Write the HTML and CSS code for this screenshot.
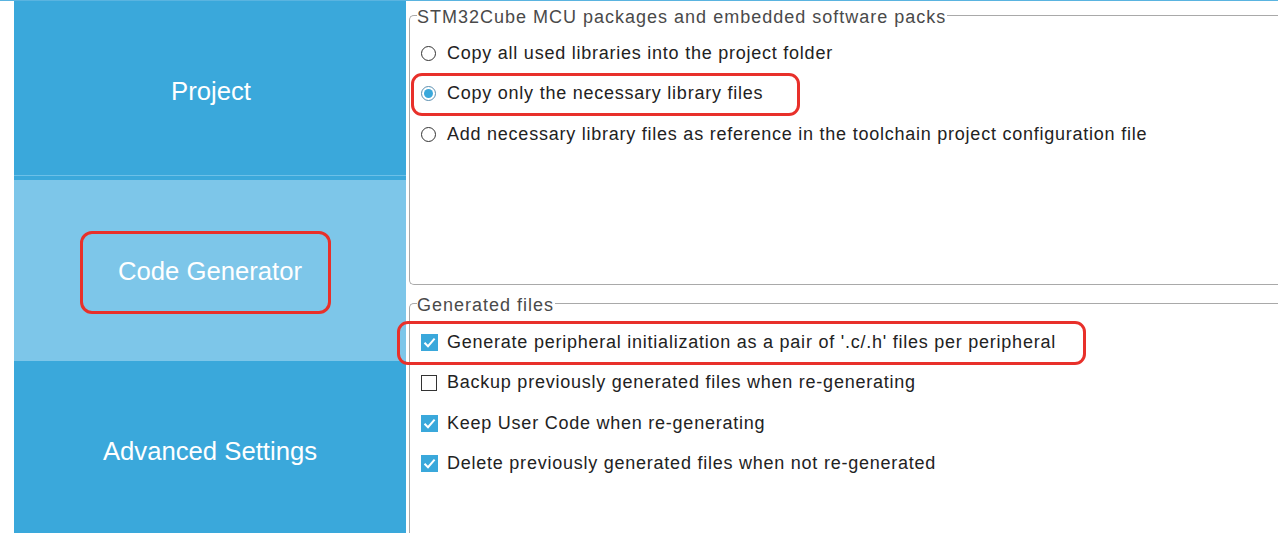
FILE: index.html
```html
<!DOCTYPE html>
<html>
<head>
<meta charset="utf-8">
<link rel="stylesheet" href="styles.css">
</head>
<body>
<div class="page">
  <nav class="sidebar">
    <div class="tab tab-dark tab-project"><span>Project</span></div>
    <div class="tab-sep"></div>
    <div class="tab tab-light tab-code"><span class="hl hl-code">Code Generator</span></div>
    <div class="tab tab-dark tab-adv"><span>Advanced Settings</span></div>
  </nav>
  <main class="content">
    <fieldset class="group group-packs">
      <legend>STM32Cube MCU packages and embedded software packs</legend>
      <label class="row"><span class="radio"></span>Copy all used libraries into the project folder</label>
      <label class="row hl hl-copy"><span class="radio checked"></span>Copy only the necessary library files</label>
      <label class="row"><span class="radio"></span>Add necessary library files as reference in the toolchain project configuration file</label>
    </fieldset>
    <fieldset class="group group-files">
      <legend>Generated files</legend>
      <label class="row hl hl-gen"><span class="check on"><svg viewBox="0 0 17 17" width="17" height="17"><path d="M3.5 8.8 L7 12.2 L13.6 4.6" fill="none" stroke="#fff" stroke-width="2"/></svg></span>Generate peripheral initialization as a pair of '.c/.h' files per peripheral</label>
      <label class="row"><span class="check"></span>Backup previously generated files when re-generating</label>
      <label class="row"><span class="check on"><svg viewBox="0 0 17 17" width="17" height="17"><path d="M3.5 8.8 L7 12.2 L13.6 4.6" fill="none" stroke="#fff" stroke-width="2"/></svg></span>Keep User Code when re-generating</label>
      <label class="row"><span class="check on"><svg viewBox="0 0 17 17" width="17" height="17"><path d="M3.5 8.8 L7 12.2 L13.6 4.6" fill="none" stroke="#fff" stroke-width="2"/></svg></span>Delete previously generated files when not re-generated</label>
    </fieldset>
  </main>
</div>
</body>
</html>
```

FILE: styles.css
```css
html, body {
  margin: 0;
  padding: 0;
  background: #fff;
  overflow: hidden;
}
body {
  width: 1278px;
  height: 533px;
  border-top: 1px solid #5ab4e0;
  box-sizing: border-box;
  font-family: "Liberation Sans", Arial, sans-serif;
}
.page {
  display: flex;
  height: 532px;
}
.sidebar {
  margin-left: 14px;
  width: 392px;
  display: flex;
  flex-direction: column;
  flex-shrink: 0;
}
.tab {
  display: flex;
  align-items: center;
  justify-content: center;
  color: #fff;
  font-size: 25.7px;
}
.tab-dark { background: #3aa8db; }
.tab-light { background: #7dc6e9; }
.tab-project {
  height: 174px;
  border-bottom: 1px solid #6cc0e8;
}
.tab-sep {
  height: 4px;
  background: #3aa8db;
}
.tab-code {
  height: 181px;
}
.tab-adv {
  flex: 1;
}
.tab-project span { margin-top: 6px; margin-left: 2px; }
.tab-adv span { margin-top: 8px; }
.hl {
  position: relative;
}
.hl::before {
  content: "";
  position: absolute;
  border: 3px solid #e8302a;
  border-radius: 11px;
  pointer-events: none;
}
.hl-code {
  margin-top: 2px;
}
.hl-code::before {
  left: -38px;
  right: -29px;
  top: -26px;
  bottom: -28px;
  border-radius: 12px;
}
.content {
  flex: 1;
  padding-left: 3px;
  display: flex;
  flex-direction: column;
  min-width: 0;
}
.group {
  margin: 0;
  border: 1px solid #a9a9a9;
  border-right: none;
  border-radius: 5px 0 0 5px;
  padding: 0 0 0 11px;
  min-width: 0;
}
.group legend {
  font-size: 18px;
  color: #4a4a4a;
  padding: 0 1px 0 0;
  margin-left: -4px;
  line-height: 20px;
  letter-spacing: 1px;
  position: relative;
  top: 2px;
}
.group-packs {
  height: 280px;
  box-sizing: border-box;
  margin-top: 4px;
  padding-top: 8px;
}
.group-files {
  flex: 1;
  margin-top: 8px;
  border-bottom: none;
  border-radius: 5px 0 0 0;
  padding-top: 9px;
}
.row {
  display: flex;
  align-items: center;
  height: 40.5px;
  font-size: 18px;
  color: #222;
  white-space: nowrap;
  letter-spacing: 0.76px;
}
.radio {
  width: 13px;
  height: 13px;
  border: 1.5px solid #333;
  border-radius: 50%;
  margin-right: 11px;
  display: inline-flex;
  align-items: center;
  justify-content: center;
  flex-shrink: 0;
}
.radio.checked {
  border-color: #5b8fb0;
}
.radio.checked::after {
  content: "";
  width: 9px;
  height: 9px;
  border-radius: 50%;
  background: #3aa8db;
}
.check {
  width: 14px;
  height: 14px;
  border: 1.5px solid #333;
  margin-right: 10px;
  flex-shrink: 0;
  display: inline-flex;
}
.check.on {
  width: 17px;
  height: 17px;
  border: none;
  background: #3aa8db;
  margin-right: 9px;
}
.hl-copy::before {
  left: -10px;
  width: 389px;
  top: -1px;
  height: 43px;
  box-sizing: border-box;
}
.hl-gen::before {
  left: -24px;
  width: 689px;
  top: -1px;
  height: 44px;
  box-sizing: border-box;
}
```
